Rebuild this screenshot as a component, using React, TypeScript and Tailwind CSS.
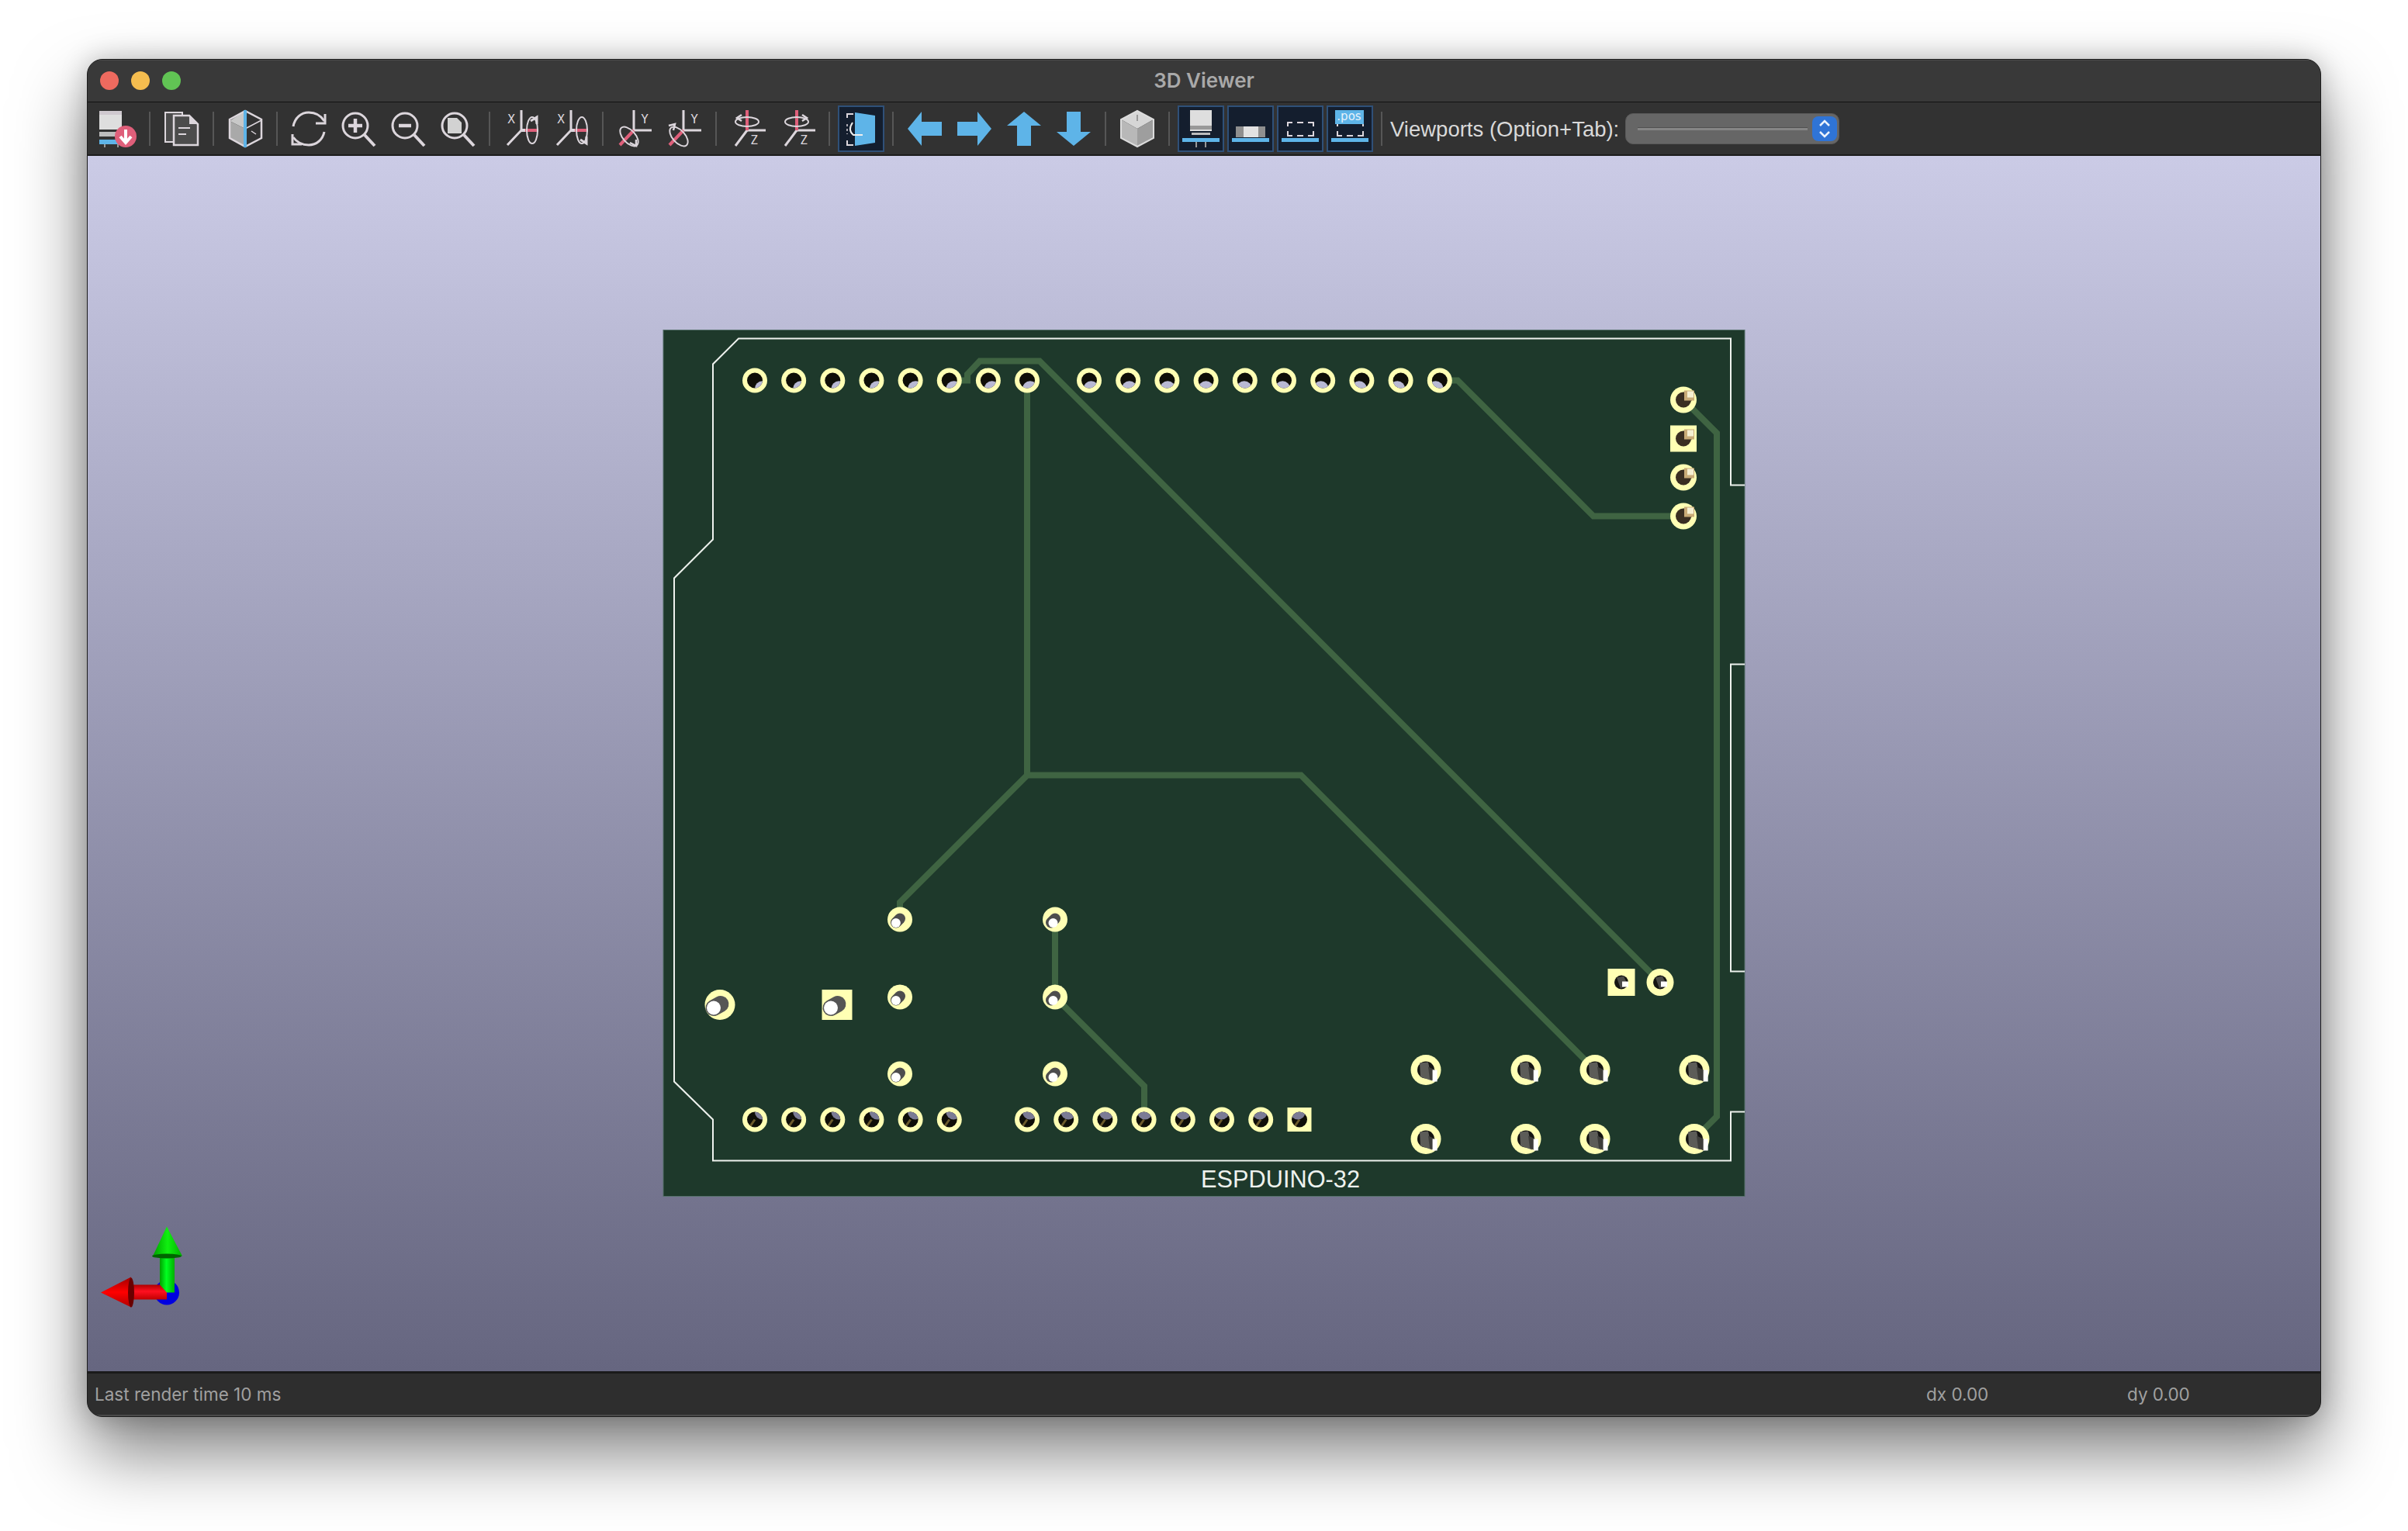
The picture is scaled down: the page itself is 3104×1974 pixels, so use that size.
import React from "react";

const LIGHT = "#dcd6dc";
const PINK = "#df5f7a";
const BLUE = "#5eb4e8";
const VIEW_X = 1552;
const VIEW_Y = 985;

function Icon({ children }: { children: React.ReactNode }) {
  return (
    <svg width="48" height="48" viewBox="0 0 48 48" fill="none" stroke={LIGHT} strokeWidth="2.5" overflow="visible">
      {children}
    </svg>
  );
}

function Tool({ children, active }: { children: React.ReactNode; active?: boolean }) {
  return (
    <div className="flex h-[64px] w-[64px] shrink-0 items-center justify-center">
      <div
        className={
          active
            ? "flex h-[60px] w-[60px] items-center justify-center border-2 border-[#2f5078] bg-[#141e2e]"
            : "flex h-[60px] w-[60px] items-center justify-center"
        }
      >
        {children}
      </div>
    </div>
  );
}

function Sep() {
  return (
    <div className="flex h-[64px] w-[18px] shrink-0 items-center justify-center">
      <div className="h-[44px] w-[2px] bg-[#565656]" />
    </div>
  );
}

function Letter({ x, y, children }: { x: number; y: number; children: string }) {
  return (
    <text
      x={x}
      y={y}
      textAnchor="middle"
      fill={LIGHT}
      stroke="none"
      fontSize="16"
      fontFamily="'DejaVu Sans Mono', monospace"
    >
      {children}
    </text>
  );
}

function ZoomGlass({ children }: { children?: React.ReactNode }) {
  return (
    <Icon>
      <circle cx="20" cy="20" r="16" strokeWidth="3" />
      <path d="M32 32 L45 46" strokeWidth="4" />
      {children}
    </Icon>
  );
}

function RotX({ flip }: { flip?: boolean }) {
  return (
    <Icon>
      <g transform="translate(2 0)">
        <Letter x={9} y={17}>X</Letter>
        <path d="M22 0 V26 L4 45" strokeWidth="3" />
        <path d="M22 26 H44" stroke={PINK} strokeWidth="4" />
        <path d="M22 26 H27" strokeWidth="4" />
        <ellipse cx="36" cy="26" rx="7" ry="17" strokeWidth="2" />
        <path d={flip ? "M34 38 L42 43 L42 34" : "M34 14 L42 9 L42 18"} strokeWidth="3" />
      </g>
    </Icon>
  );
}

function RotY({ flip }: { flip?: boolean }) {
  return (
    <Icon>
      <g transform="translate(2 0)">
        <Letter x={35} y={17}>Y</Letter>
        <path d="M21 0 V26 H44" strokeWidth="3" />
        <path d="M21 26 L3 45" stroke={PINK} strokeWidth="4" />
        <ellipse cx="15" cy="34" rx="15" ry="8" transform="rotate(48 15 34)" strokeWidth="2" />
        <path d={flip ? "M2 20 L10 18 L8 26" : "M16 42 L24 46 L24 38"} strokeWidth="2.5" />
      </g>
    </Icon>
  );
}

function RotZ({ flip }: { flip?: boolean }) {
  return (
    <Icon>
      <Letter x={32} y={44}>Z</Letter>
      <path d="M23 26 H47" strokeWidth="3" />
      <path d="M23 26 L8 46" strokeWidth="3" />
      <path d="M23 0 V26" stroke={PINK} strokeWidth="4" />
      <ellipse cx="23" cy="15" rx="15" ry="6" strokeWidth="2" />
      <path d={flip ? "M30 6 L36 10 L30 14" : "M16 6 L10 10 L16 14"} strokeWidth="2.5" />
    </Icon>
  );
}

function Arrow({ rotate }: { rotate: number }) {
  return (
    <Icon>
      <polygon
        points="2,24 20,2 20,15 46,15 46,33 20,33 20,46"
        fill={BLUE}
        stroke="none"
        transform={`rotate(${rotate} 24 24)`}
      />
    </Icon>
  );
}

function PartBar() {
  return <rect x="0" y="36" width="48" height="5" fill={BLUE} stroke="none" />;
}

function DashBox() {
  return <path d="M8 21 V16 H14 M20 16 H28 M34 16 H41 V21 M41 27 V33 H34 M28 33 H20 M14 33 H8 V27" strokeWidth="2" />;
}

function Toolbar() {
  return (
    <div className="flex h-[67px] shrink-0 items-center bg-[#323232] pl-[7px]">
      <Tool>
        <Icon>
          <rect x="0" y="1" width="29" height="24" fill="#dedede" stroke="none" />
          <rect x="0" y="1" width="29" height="5" fill="#cfc9cf" stroke="none" />
          <rect x="0" y="28" width="29" height="6" fill="#bdbdbd" stroke="none" />
          <rect x="0" y="38" width="24" height="6" fill={BLUE} stroke="none" />
          <path d="M7 44 V48 M24 44 V48" strokeWidth="2" stroke="#999" />
          <circle cx="34" cy="34" r="14" fill={PINK} stroke="none" />
          <path d="M34 25 V40 M27 34 L34 42 L41 34" stroke="#fff" strokeWidth="4" />
        </Icon>
      </Tool>
      <Sep />
      <Tool>
        <Icon>
          <rect x="3" y="3" width="22" height="38" fill="#4c4c4c" strokeWidth="2" />
          <path d="M14 7 H34 L45 18 V45 H14 Z" fill="#4c4c4c" strokeWidth="2.5" />
          <path d="M34 7 L45 18 H34 Z" fill={LIGHT} stroke="none" />
          <path d="M20 23 H35 M20 31 H30" strokeWidth="2" />
        </Icon>
      </Tool>
      <Sep />
      <Tool>
        <Icon>
          <polygon points="24,1 24,24 4,14" fill="#c8c8c8" stroke="none" />
          <polygon points="24,24 24,47 4,36 4,14" fill="#a9a9a9" stroke="none" />
          <path d="M24 1 L4 12 V36 L24 47 L45 36 V12 Z" strokeWidth="2.5" />
          <path d="M24 24 L45 13 M32 27 L38 31" strokeWidth="1.5" />
          <path d="M24 0 V48" stroke={BLUE} strokeWidth="4" />
        </Icon>
      </Tool>
      <Sep />
      <Tool>
        <Icon>
          <path d="M4 21 C6 10 14 3 24 3 C32 3 39 6 44 14" strokeWidth="3" />
          <path d="M45 5 V17 H33" strokeWidth="3" />
          <path d="M44 28 C42 38 34 45 24 45 C16 45 9 42 4 35" strokeWidth="3" />
          <path d="M3 31 V44 H15" strokeWidth="3" />
        </Icon>
      </Tool>
      <Tool>
        <ZoomGlass>
          <path d="M20 11 V29 M11 20 H29" strokeWidth="4.5" />
        </ZoomGlass>
      </Tool>
      <Tool>
        <ZoomGlass>
          <path d="M12 20 H28" strokeWidth="4.5" />
        </ZoomGlass>
      </Tool>
      <Tool>
        <ZoomGlass>
          <polygon points="11,10 23,10 29,16 29,30 11,30" fill="#d2d2d2" stroke="none" />
        </ZoomGlass>
      </Tool>
      <Sep />
      <Tool>
        <RotX />
      </Tool>
      <Tool>
        <RotX flip />
      </Tool>
      <Sep />
      <Tool>
        <RotY />
      </Tool>
      <Tool>
        <RotY flip />
      </Tool>
      <Sep />
      <Tool>
        <RotZ />
      </Tool>
      <Tool>
        <RotZ flip />
      </Tool>
      <Sep />
      <Tool active>
        <Icon>
          <path d="M14 5 H6 V10 M6 39 V45 H14" strokeWidth="2" />
          <path d="M6 18 V31" strokeWidth="1.5" strokeDasharray="3 3" />
          <polygon points="16,3 42,7 42,42 16,46" fill={BLUE} stroke="none" />
          <path d="M13 16 C9 22 9 28 14 32 H26" stroke="#eee" strokeWidth="2" />
        </Icon>
      </Tool>
      <Sep />
      <Tool>
        <Arrow rotate={0} />
      </Tool>
      <Tool>
        <Arrow rotate={180} />
      </Tool>
      <Tool>
        <Arrow rotate={90} />
      </Tool>
      <Tool>
        <Arrow rotate={270} />
      </Tool>
      <Sep />
      <Tool>
        <Icon>
          <polygon points="24,1 45,12 24,24 3,12" fill="#d6d6d6" stroke="none" />
          <polygon points="3,12 24,24 24,47 3,36" fill="#b8b8b8" stroke="none" />
          <polygon points="45,12 24,24 24,47 45,36" fill="#9e9e9e" stroke="none" />
          <path d="M24 1 L45 12 V36 L24 47 L3 36 V12 Z" stroke="#dcdcdc" strokeWidth="2" />
          <path d="M24 6 V14" stroke="#999" strokeWidth="2" />
        </Icon>
      </Tool>
      <Sep />
      <Tool active>
        <Icon>
          <rect x="10" y="0" width="28" height="27" fill="#dedede" stroke="none" />
          <rect x="10" y="20" width="28" height="5" fill="#999" stroke="none" />
          <rect x="12" y="29" width="24" height="3" fill="#bdbdbd" stroke="none" />
          <rect x="0" y="36" width="48" height="5" fill={BLUE} stroke="none" />
          <path d="M18 41 V48 M30 41 V48" stroke="#999" strokeWidth="2" />
        </Icon>
      </Tool>
      <Tool active>
        <Icon>
          <rect x="5" y="21" width="38" height="14" fill="#8f8f8f" stroke="none" />
          <rect x="15" y="21" width="19" height="14" fill="#e2e2e2" stroke="none" />
          <PartBar />
        </Icon>
      </Tool>
      <Tool active>
        <Icon>
          <DashBox />
          <PartBar />
        </Icon>
      </Tool>
      <Tool active>
        <Icon>
          <DashBox />
          <rect x="5" y="0" width="37" height="18" fill={BLUE} stroke="none" />
          <text x="23" y="13" textAnchor="middle" fontSize="15" fill="#e6f2fb" stroke="none" fontFamily="'DejaVu Sans', sans-serif">
            .pos
          </text>
          <PartBar />
        </Icon>
      </Tool>
      <Sep />
      <span className="ml-[2px] translate-y-[1px] whitespace-nowrap font-['Liberation_Sans',sans-serif] text-[27.5px] text-[#d9d9d9]">
        Viewports (Option+Tab):
      </span>
      <div className="relative ml-[8px] flex h-[40px] w-[276px] items-center rounded-[10px] border border-[#5a5a5a] bg-[#666666] pl-[15px]">
        <div className="h-[4px] w-[219px] border-t border-[#505050] bg-[#858585]" />
        <div className="absolute top-[3px] right-[2px] flex h-[32px] w-[32px] items-center justify-center rounded-[8px] bg-[#2f74d6]">
          <svg width="18" height="26" viewBox="0 0 18 26" fill="none" stroke="#eaf2fc" strokeWidth="2.5">
            <path d="M3 9 L9 3 L15 9 M3 17 L9 23 L15 17" />
          </svg>
        </div>
      </div>
    </div>
  );
}

type PadKind = "open" | "socket" | "round" | "small" | "post" | "tab";

const range = (n: number, start: number, step: number) => Array.from({ length: n }, (_, i) => start + i * step);

const canvasAt = (y: number) => {
  const t = (y - 202) / 1566;
  const r = Math.round(203 - 101 * t);
  const b = Math.round(230 - 102 * t);
  return `rgb(${r},${r},${b})`;
};

function Pad({ x, y, r, kind, square }: { x: number; y: number; r: number; kind: PadKind; square?: boolean }) {
  const dx = x - VIEW_X;
  const dy = y - VIEW_Y;
  const clip = `hole-${x}-${y}`;

  return (
    <g>
      {square ? (
        <rect x={x - r} y={y - r} width={r * 2} height={r * 2} fill="#ffffb4" />
      ) : (
        <circle cx={x} cy={y} r={r} fill="#ffffb4" />
      )}
      {kind === "open" && (
        <>
          <clipPath id={clip}>
            <circle cx={x} cy={y} r={10} />
          </clipPath>
          <circle cx={x} cy={y} r={10} fill="#0f0e08" />
          <g clipPath={`url(#${clip})`}>
            {dy > 0 && <path d={`M${x} ${y} L${x - 7} ${y + 10}`} stroke="#6b5a2c" strokeWidth="3" />}
            <circle cx={x - dx * 0.017} cy={y - dy * 0.022} r={10} fill={canvasAt(y)} />
          </g>
        </>
      )}
      {kind === "socket" && (
        <>
          <circle cx={x} cy={y} r={10} fill="#3a2e22" />
          <path d={`M${x} ${y + 10} L${x + 14} ${y - 2} L${x} ${y - 10} Z`} fill="#3a2e22" />
          <rect x={x + 1} y={y - 12} width={13} height={13} fill="#c9ab78" />
          <rect x={x + 5} y={y - 11} width={8} height={8} fill="#f6efd2" />
        </>
      )}
      {kind === "round" && (
        <>
          <path d={`M${x + 1} ${y - 1} L${x - 8} ${y + 4}`} stroke="#555" strokeWidth="21" strokeLinecap="round" />
          <circle cx={x - 8} cy={y + 4} r={9} fill="#fff" />
        </>
      )}
      {kind === "small" && (
        <>
          <path d={`M${x} ${y - 1} L${x - 5} ${y + 4}`} stroke="#4d4d4d" strokeWidth="14" strokeLinecap="round" />
          <circle cx={x + dx * 0.013} cy={y + 4.5} r={6} fill="#fff" />
        </>
      )}
      {kind === "post" && (
        <>
          <circle cx={x} cy={y} r={11} fill="#141412" />
          <polygon
            points={`${x - 8},${y - 9} ${x + 3},${y - 10} ${x + 8},${y + 14} ${x - 7},${y + 9}`}
            fill="#5c5c58"
          />
          <polygon points={`${x + 3},${y - 4} ${x + 12},${y} ${x + 12},${y + 15} ${x + 5},${y + 12}`} fill="#3d3d3a" />
          <rect x={x + 6 + dx * 0.009} y={y} width={6} height={15} fill="#fff" />
        </>
      )}
      {kind === "tab" && (
        <>
          <circle cx={x} cy={y} r={9} fill="#141412" />
          <polygon points={`${x - 6},${y - 6} ${x + 3},${y - 8} ${x + 8},${y + 3} ${x - 1},${y + 8}`} fill="#4a4a48" />
          <rect x={x + 1} y={y - 1} width={8} height={7} fill="#fff" />
        </>
      )}
    </g>
  );
}

function Gizmo() {
  return (
    <g>
      <circle cx="215" cy="1667" r="16" fill="#0000e0" />
      <rect x="167" y="1657" width="48" height="19" fill="url(#shaftR)" />
      <polygon points="206,1618 225,1618 225,1667 215,1667 206,1657" fill="url(#shaftG)" />
      <polygon points="215,1582 197,1620 235,1620" fill="url(#coneG)" />
      <ellipse cx="215" cy="1620" rx="19" ry="3" fill="#006400" />
      <polygon points="130,1667 169,1647 169,1686" fill="url(#coneR)" />
      <ellipse cx="169" cy="1667" rx="4" ry="19" fill="#6a0000" />
    </g>
  );
}

function Board() {
  const trace = { fill: "none", stroke: "#3f6442", strokeWidth: 8 };
  const top = [...range(8, 973, 50.15), ...range(10, 1404, 50.2)];
  const bottom = [...range(6, 973, 50.15), ...range(7, 1324, 50.2)];

  return (
    <svg className="block h-full w-full" viewBox="113 202 2878 1566">
      <defs>
        <linearGradient id="shaftG" x1="0" x2="1" y1="0" y2="0">
          <stop offset="0" stopColor="#00a000" />
          <stop offset="0.45" stopColor="#00ff20" />
          <stop offset="1" stopColor="#00b000" />
        </linearGradient>
        <linearGradient id="coneG" x1="0" x2="1" y1="0" y2="0">
          <stop offset="0" stopColor="#00a000" />
          <stop offset="0.5" stopColor="#10f010" />
          <stop offset="1" stopColor="#00b000" />
        </linearGradient>
        <linearGradient id="shaftR" x1="0" x2="0" y1="0" y2="1">
          <stop offset="0" stopColor="#b00000" />
          <stop offset="0.45" stopColor="#ff1020" />
          <stop offset="1" stopColor="#c00000" />
        </linearGradient>
        <linearGradient id="coneR" x1="0" x2="0" y1="0" y2="1">
          <stop offset="0" stopColor="#a00000" />
          <stop offset="0.5" stopColor="#ff0000" />
          <stop offset="1" stopColor="#b00000" />
        </linearGradient>
      </defs>

      <rect x="855" y="426" width="1394" height="1117" fill="#1e392b" stroke="#55706a" strokeWidth="1" />

      {/* tracks */}
      <path {...trace} d="M1223 491 H1247 V483 L1263 466 H1340 L2140 1267" />
      <path {...trace} d="M1324 491 V1000 L1160 1164 V1186 M1324 1000 H1677 L2056 1380" />
      <path {...trace} d="M1856 491 H1879 L2054 666 H2170" />
      <path {...trace} d="M2170 516 L2213 559 V1440 L2184 1469" />
      <path {...trace} d="M1360 1186 V1286 L1475 1401 V1444" />

      {/* board outline */}
      <path
        fill="none"
        stroke="#eef2ee"
        strokeWidth="2"
        d="M2249 626 H2231 V437 H952 L919 470 V696 L869 746 V1395 L919 1444 V1497 H2231 V1434 H2249 M2249 857 H2231 V1253 H2249"
      />

      {top.map((x) => (
        <Pad key={x} x={x} y={491} r={16} kind="open" />
      ))}
      {bottom.map((x) => (
        <Pad key={x} x={x} y={1444} r={16} kind="open" />
      ))}
      <Pad x={1675} y={1444} r={15.5} kind="open" square />

      {[516, 566, 616, 666].map((y) => (
        <Pad key={y} x={2170} y={y} r={17} kind="socket" square={y === 566} />
      ))}

      <Pad x={928} y={1296} r={19.5} kind="round" />
      <Pad x={1079} y={1296} r={19.5} kind="round" square />
      {[1160, 1360].flatMap((x) =>
        [1186, 1286, 1385].map((y) => <Pad key={`${x}-${y}`} x={x} y={y} r={16} kind="small" />),
      )}

      <Pad x={2090} y={1267} r={17.5} kind="tab" square />
      <Pad x={2140} y={1267} r={17.5} kind="tab" />
      {[1838, 1967, 2056, 2184].flatMap((x) =>
        [1380, 1469].map((y) => <Pad key={`${x}-${y}`} x={x} y={y} r={19.5} kind="post" />),
      )}

      <text
        x="1548"
        y="1531"
        fill="#eef2ee"
        fontSize="30.7"
        textLength="205"
        lengthAdjust="spacing"
        fontFamily="'Liberation Sans', sans-serif"
      >
        ESPDUINO-32
      </text>

      <Gizmo />
    </svg>
  );
}

export default function App() {
  return (
    <div className="h-[1974px] w-[3104px] overflow-hidden bg-white pt-[76px] pl-[112px]">
      <div className="flex h-[1751px] w-[2880px] flex-col overflow-hidden rounded-[20px] border border-[#1c1c1c] bg-[#323232] shadow-[0_46px_90px_rgba(0,0,0,0.5),0_0_34px_rgba(0,0,0,0.22)]">
        <div className="relative flex h-[55px] shrink-0 items-center justify-center border-b border-[#111111] bg-[#393939] shadow-[inset_0_1px_0_#4c4c4c]">
          <div className="absolute left-[16px] flex gap-[16px]">
            <div className="h-[24px] w-[24px] rounded-full bg-[#ee6a5f]" />
            <div className="h-[24px] w-[24px] rounded-full bg-[#f5bd4f]" />
            <div className="h-[24px] w-[24px] rounded-full bg-[#61c454]" />
          </div>
          <span className="-translate-y-[1px] font-['Inter',sans-serif] text-[26px] font-semibold text-[#a9a9a9]">3D Viewer</span>
        </div>
        <Toolbar />
        <div className="h-[2px] shrink-0 bg-[#1c1c1c]" />
        <div className="min-h-0 flex-1 bg-gradient-to-b from-[#cbcbe6] to-[#666680]">
          <Board />
        </div>
        <div className="flex h-[58px] shrink-0 items-center border-t-[3px] border-[#1a1a1a] bg-[#2e2e2e] font-['Inter',sans-serif] text-[22.5px] text-[#a0a0a0] shadow-[inset_0_-2px_0_#4a4a4a]">
          <span className="ml-[9px] w-[2361px] -translate-y-[1px]">Last render time 10 ms</span>
          <span className="w-[259px] -translate-y-[1px]">dx 0.00</span>
          <span className="-translate-y-[1px]">dy 0.00</span>
        </div>
      </div>
    </div>
  );
}
